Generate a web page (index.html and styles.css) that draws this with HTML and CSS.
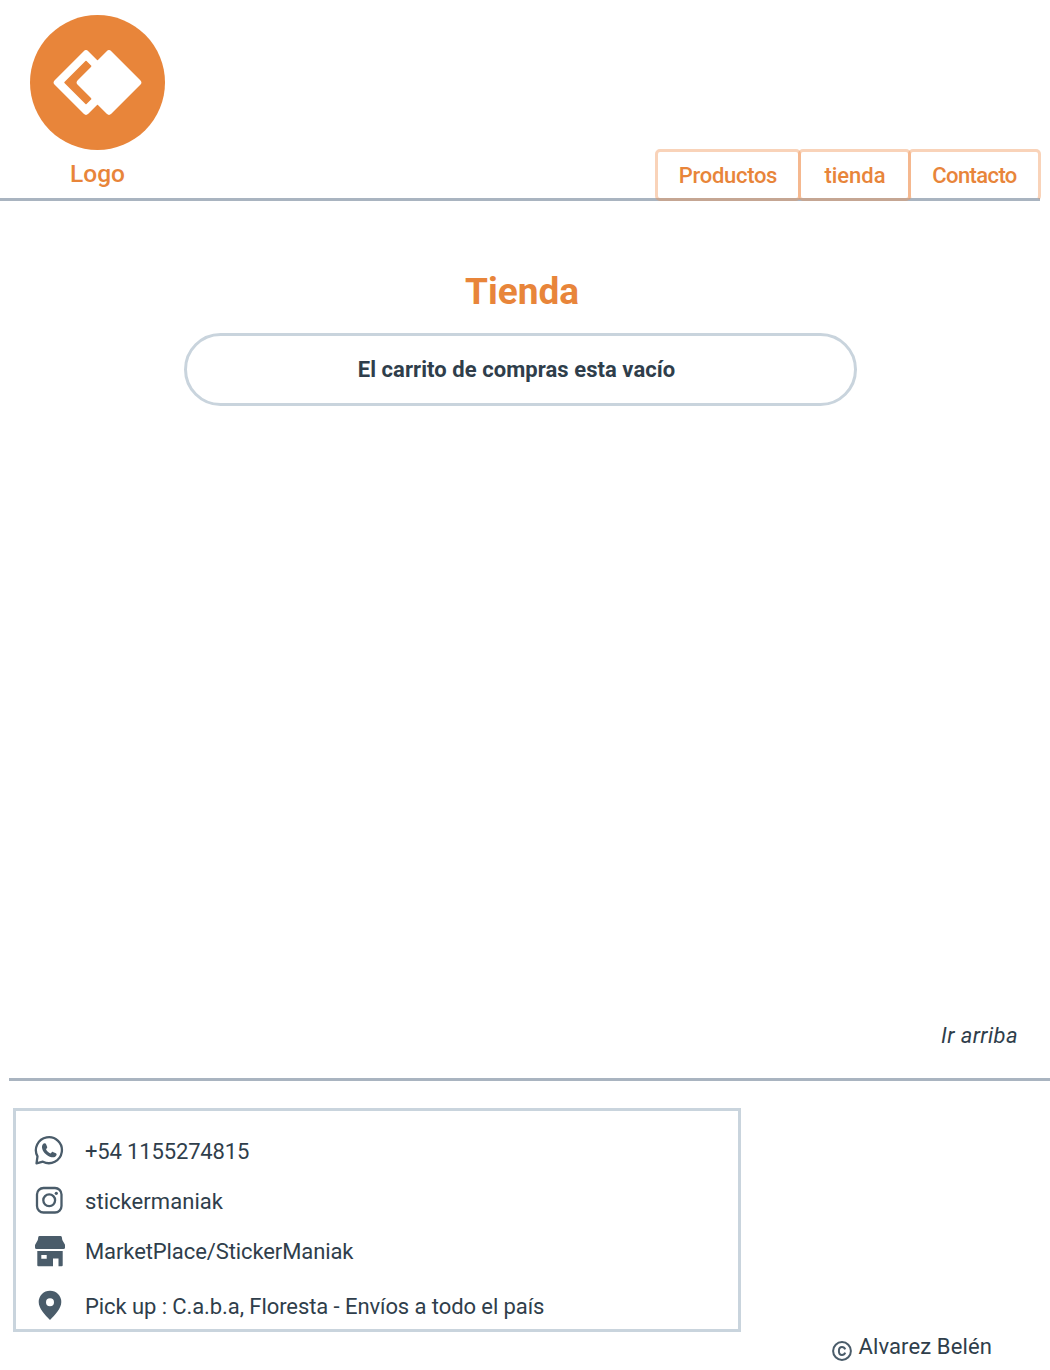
FILE: index.html
```html
<!DOCTYPE html>
<html lang="es">
<head>
<meta charset="utf-8">
<title>Tienda</title>
<link rel="stylesheet" href="styles.css">
</head>
<body>
<header class="header">
  <a class="brand" href="#">
    <svg class="brand-mark" viewBox="0 0 135 135" aria-hidden="true">
      <circle cx="67.5" cy="67.5" r="67.5" fill="#e8853a"/>
      <path d="M56 38.5 27 67.5 56 96.5 85 67.5Z" fill="#fff" stroke="#fff" stroke-width="6.500" stroke-linejoin="round"/>
      <path d="M56 46.500 35 67.500 56 88.500 77 67.500Z" fill="#e8853a" stroke="#e8853a" stroke-width="1.500" stroke-linejoin="round"/>
      <path d="M61.500 51.500 67.500 45.500 73 51V84L67.500 89.500 61.500 83.500Z" fill="#fff"/>
      <path d="M79 38.500 50 67.500 79 96.500 108 67.500Z" fill="#fff" stroke="#fff" stroke-width="6.500" stroke-linejoin="round"/>
    </svg>
    <span class="brand-name">Logo</span>
  </a>
  <nav class="nav">
    <a class="nav-item nav-products" href="#"><span>Productos</span></a>
    <a class="nav-item nav-store" href="#"><span>tienda</span></a>
    <a class="nav-item nav-contact" href="#"><span>Contacto</span></a>
  </nav>
</header>
<main class="main">
  <h1 class="title">Tienda</h1>
  <p class="cart">El carrito de compras esta vacío</p>
  <a class="to-top" href="#">Ir arriba</a>
</main>
<footer class="footer">
  <ul class="contact">
    <li class="row">
      <svg class="icon" viewBox="0 0 32 32"><path d="M3.500 29.300 4.500 22.400A13 13 0 1 1 9.900 27.700Z" fill="none" stroke="#4a5c6a" stroke-width="2.300" stroke-linejoin="round"/><path d="M10.200 9.800c.7-.9 2.300-.9 2.700 0l1.300 3.200c.2.600-.3 1.300-1.200 2.300 1 2 2.500 3.400 4.600 4.300 1.200-1.500 1.700-1.900 2.300-1.700l3 1.400c.9.500.9 1.200.4 2.200-.8 1.600-3 2.200-4.800 1.700-4.600-1.200-8-4.400-9.200-8.200-.5-1.800-.5-3.700.9-5.200Z" fill="#4a5c6a"/></svg>
      <span class="t-phone">+54 1155274815</span>
    </li>
    <li class="row">
      <svg class="icon" viewBox="0 0 32 32" fill="none" stroke="#4a5c6a" stroke-width="2.300"><rect x="4" y="4" width="24.500" height="24.500" rx="6.500"/><circle cx="16.200" cy="16.300" r="5.900"/><circle cx="23.300" cy="9.300" r="1.600" fill="#4a5c6a" stroke="none"/></svg>
      <span class="t-insta">stickermaniak</span>
    </li>
    <li class="row row-market">
      <svg class="icon" viewBox="0 0 32 32" fill="#4a5c6a"><path d="M6.500 1h21q1 0 1.300 1l.5 3 2.800 5v2.500Q32 14 30.500 14h-27Q2 14 2 12.500V10l2.800-5 .5-3Q5.500 1 6.500 1Z"/><path fill-rule="evenodd" d="M4.300 16h25.400v14.300q0 1-1 1H25.500V23.500h-5.500v7.800H5.300q-1 0-1-1ZM8.300 20v3.700h5.400v-3.700Z"/></svg>
      <span class="t-market">MarketPlace/StickerManiak</span>
    </li>
    <li class="row row-last">
      <svg class="icon" viewBox="0 0 32 32"><path fill="#4a5c6a" fill-rule="evenodd" d="M17 1.700A11.200 11.200 0 0 0 5.700 13C5.700 19.500 12 26 17 31 22 26 28.300 19.500 28.300 13A11.200 11.200 0 0 0 17 1.700ZM17 9.200a4 4 0 1 1 0 8 4 4 0 0 1 0-8Z"/></svg>
      <span class="t-pickup">Pick up : C.a.b.a, Floresta - Envíos a todo el país</span>
    </li>
  </ul>
  <div class="copyright">
    <svg class="copy-icon" viewBox="0 0 20 20" fill="none" stroke="#4a5c6a"><circle cx="10" cy="10" r="8.900" stroke-width="2"/><path d="M13.200 8.300C12.700 6.900 11.600 6 10 6 8 6 6.900 7.500 6.900 10s1.100 4 3.100 4c1.600 0 2.700-.9 3.200-2.300" stroke-width="2"/></svg>
    <span class="t-author">Alvarez Belén</span>
  </div>
</footer>
</body>
</html>
```
FILE: styles.css
```css
* { box-sizing: border-box; }
body {
  margin: 0;
  width: 1050px;
  height: 1370px;
  overflow: hidden;
  display: flex;
  flex-direction: column;
  background: #fff;
  color: #2f3e4b;
  font: 400 22px/30px Roboto, "Liberation Sans", sans-serif;
}
a { color: inherit; text-decoration: none; }
span { white-space: nowrap; }
.header {
  width: 1040px;
  height: 201px;
  display: flex;
  justify-content: space-between;
  background: linear-gradient(#a9b4c0, #a9b4c0) 0 100% / 100% 3px no-repeat;
  color: #e8853a;
}
.brand {
  width: 135px;
  margin: 15px 0 0 30px;
  display: flex;
  flex-direction: column;
  align-items: center;
}
.brand-mark { width: 135px; height: 135px; }
.brand-name { margin-top: 9px; font-size: 24.5px; font-weight: 500; }
.nav { display: flex; align-items: flex-end; margin-right: -1px; }
.nav-item {
  height: 52px;
  display: flex;
  align-items: center;
  justify-content: center;
  padding-top: 1px;
  border: 3px solid rgba(240, 145, 80, .4);
  border-radius: 5px;
  font-weight: 500;
}
.nav-products { width: 146px; letter-spacing: -.3px; }
.nav-store { width: 113px; margin-left: -3px; padding-left: 1px; }
.nav-contact {
  width: 133px;
  margin-left: -3px;
  border-bottom-color: transparent;
  letter-spacing: -.6px;
}
.main {
  flex: none;
  height: 877px;
  display: flex;
  flex-direction: column;
  align-items: center;
  padding-right: 10px;
}
.title {
  margin: 70px 0 0 4px;
  color: #e8853a;
  font-size: 37px;
  font-weight: 700;
  line-height: 42px;
}
.cart {
  width: 673px;
  height: 73px;
  margin: 20px 0 0;
  padding: 1px 7px 0 0;
  display: flex;
  align-items: center;
  justify-content: center;
  border: 3px solid #c9d4dd;
  border-radius: 37px;
  font-weight: 700;
  letter-spacing: .06px;
}
.to-top {
  align-self: flex-end;
  margin: auto 22px 27px 0;
  font-style: italic;
  letter-spacing: .4px;
}
.footer {
  flex: 1;
  display: flex;
  justify-content: space-between;
  align-items: flex-start;
  margin-left: 9px;
  border-top: 3px solid #a9b4c0;
}
.contact {
  width: 728px;
  height: 224px;
  margin: 27px 0 0 4px;
  padding: 14px 0 0 17px;
  border: 3px solid #c9d4dd;
  list-style: none;
}
.row { height: 50px; display: flex; align-items: center; gap: 20px; }
.row span { padding-top: 4px; }
.row-market .icon { margin-top: 2px; }
.row-last { margin-top: 5px; }
.icon { width: 32px; height: 32px; flex: none; }
.t-phone { letter-spacing: -.15px; }
.t-insta { letter-spacing: .05px; }
.t-market { letter-spacing: -.1px; }
.t-pickup { letter-spacing: -.08px; }
.copyright {
  display: flex;
  gap: 6px;
  margin: 251px 58px 0 0;
}
.copy-icon { width: 20px; height: 20px; margin-top: 9px; }
.t-author { letter-spacing: .12px; }
```
